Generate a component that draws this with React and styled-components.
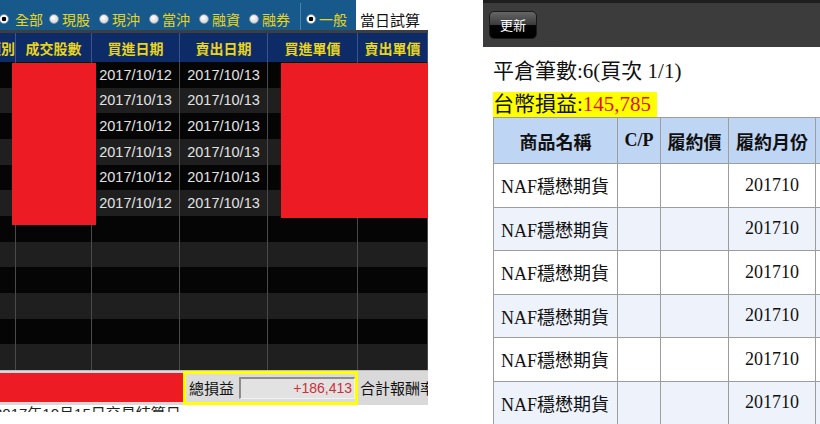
import React from "react";
import styled, { createGlobalStyle } from "styled-components";

const GlobalStyle = createGlobalStyle`
  html, body {
    margin: 0;
    padding: 0;
    background: #fff;
  }
  body {
    width: 820px;
    height: 424px;
    overflow: hidden;
  }
`;

const Page = styled.div`
  display: flex;
  align-items: flex-start;
  width: 820px;
  height: 424px;
  overflow: hidden;
`;

/* ---------- left: desktop trading terminal ---------- */

const Terminal = styled.div`
  position: relative;
  flex: none;
  width: 428px;
  overflow: hidden;
  font-family: "Liberation Sans", "Noto Sans CJK TC", sans-serif;
`;

const FilterBar = styled.div`
  display: flex;
  align-items: stretch;
  height: 33px;
  box-sizing: border-box;
  background: #17598b;
  border-bottom: 3px solid #3e3e3e;
  margin-left: -1px;
`;

const RadioItem = styled.label`
  flex: none;
  display: flex;
  align-items: center;
  gap: ${(p) => (p.$first ? 6 : 3)}px;
  width: 50px;
  padding-top: 8px;
  color: #e8d51c;
  font-size: 14px;
  white-space: nowrap;
`;

const Dot = styled.span`
  flex: none;
  width: 10px;
  height: 10px;
  border-radius: 50%;
  box-sizing: border-box;
  border: 1px solid #7f96b0;
  background: ${(p) =>
    p.$on
      ? "radial-gradient(circle, #000 0 2px, #fff 2.6px)"
      : "radial-gradient(circle at 40% 35%, #ffffff, #c9c9c9)"};
`;

const BarDivider = styled.span`
  flex: none;
  width: 1px;
  margin: 3px 5px 0 1px;
  background: #4b84ad;
`;

const Tab = styled.div`
  flex: none;
  display: flex;
  align-items: center;
  padding: 8px 0 0 4px;
  width: 73px;
  box-sizing: border-box;
  background: #fff;
  color: #111;
  font-size: 15px;
  white-space: nowrap;
`;

const cols = "16px 76px 88px 88px 90px 70px";

const HeadRow = styled.div`
  display: grid;
  grid-template-columns: ${cols};
  height: 29px;
  background: #0d2b66;
`;

const HeadCell = styled.div`
  display: flex;
  align-items: center;
  justify-content: ${(p) => (p.$end ? "flex-end" : "center")};
  overflow: hidden;
  white-space: nowrap;
  border-right: 1px solid #3b5589;
  color: #e8d51c;
  font-size: 14px;
  font-weight: bold;
`;

const Row = styled.div`
  display: grid;
  grid-template-columns: ${cols};
  height: 25.67px;
  background: ${(p) => (p.$odd ? "#1f1f1f" : "#050505")};
`;

const Cell = styled.div`
  display: flex;
  align-items: center;
  justify-content: center;
  border-right: 1px solid #4a4a4a;
  color: #e2e2e2;
  font-size: 14.5px;
  white-space: nowrap;
`;

const Redact = styled.div`
  position: absolute;
  background: #ed1c24;
`;

const TotalBar = styled.div`
  display: flex;
  align-items: center;
  height: 34px;
  border-top: 1px solid #bdbdbd;
  background: #d9d9d9;
  white-space: nowrap;
`;

const RedBlock = styled.div`
  flex: none;
  width: 183px;
  height: 29px;
  background: #ed1c24;
`;

const Highlight = styled.div`
  flex: none;
  display: flex;
  align-items: center;
  gap: 5px;
  width: 175px;
  height: 34px;
  box-sizing: border-box;
  border: 3px solid #ffff00;
  padding-left: 3px;
  background: #dcdcdc;
  color: #111;
  font-size: 15px;
`;

const ValueBox = styled.div`
  width: 116px;
  height: 22px;
  box-sizing: border-box;
  border-top: 2px solid #8c8c8c;
  border-left: 2px solid #8c8c8c;
  border-right: 1px solid #f2f2f2;
  border-bottom: 1px solid #f2f2f2;
  background: #e2e2e2;
  color: #cc2e3a;
  font-size: 14px;
  line-height: 19px;
  text-align: right;
  padding-right: 2px;
`;

const BarLabel = styled.span`
  padding-left: 2px;
  color: #111;
  font-size: 15px;
`;

const CutNote = styled.div`
  height: 6px;
  overflow: hidden;
  margin-left: -6px;
  color: #222;
  font-size: 15px;
  line-height: 15px;
  padding-top: 1px;
  white-space: nowrap;
`;

/* ---------- right: mobile web page ---------- */

const Mobile = styled.div`
  flex: none;
  margin-left: 55px;
  width: 337px;
  height: 424px;
  overflow: hidden;
  font-family: "Liberation Serif", "Noto Sans CJK TC", serif;
  color: #111;
`;

const MobileBar = styled.div`
  height: 47px;
  box-sizing: border-box;
  border-top: 3px solid #1e1e1e;
  background: #3c3c3c;
  padding: 8px 0 0 6px;
`;

const GlossButton = styled.button`
  width: 48px;
  height: 28px;
  padding: 0;
  border: 1px solid #1a1a1a;
  border-radius: 5px;
  background: linear-gradient(#666 0%, #3c3c3c 48%, #050505 52%, #000 100%);
  color: #fff;
  font-family: "Noto Sans CJK TC", sans-serif;
  font-size: 13px;
  line-height: 26px;
`;

const Summary = styled.div`
  margin: ${(p) => p.$top}px 0 0 10px;
  font-size: 21px;
  line-height: ${(p) => p.$lh}px;
  white-space: nowrap;
`;

const Marked = styled.span`
  display: inline-block;
  background: #ffff00;
  padding-right: 6px;
`;

const Money = styled.span`
  color: #e0121c;
`;

const PositionTable = styled.table`
  margin-left: 10px;
  border-collapse: collapse;
  table-layout: fixed;
  width: 430px;
  font-size: 18px;
`;

const Th = styled.th`
  height: 45px;
  padding: 0;
  border: 1px solid #9d9d9d;
  background: #bfd5f4;
  font-family: ${(p) =>
    p.$latin
      ? '"Liberation Serif", serif'
      : '"Noto Sans CJK TC", sans-serif'};
  font-weight: bold;
  font-size: 18px;
  white-space: nowrap;
`;

const Tr = styled.tr`
  height: 43.5px;
  background: ${(p) => (p.$odd ? "#eef3fb" : "#ffffff")};
`;

const Td = styled.td`
  padding: 0 0 0 ${(p) => (p.$left ? 7 : 0)}px;
  border: 1px solid #9d9d9d;
  text-align: ${(p) => (p.$left ? "left" : "center")};
  white-space: nowrap;
`;

const trades = [
  ["2017/10/12", "2017/10/13"],
  ["2017/10/13", "2017/10/13"],
  ["2017/10/12", "2017/10/13"],
  ["2017/10/13", "2017/10/13"],
  ["2017/10/12", "2017/10/13"],
  ["2017/10/12", "2017/10/13"],
];

const filters = [
  { label: "全部", on: true },
  { label: "現股" },
  { label: "現沖" },
  { label: "當沖" },
  { label: "融資" },
  { label: "融券" },
];

export default function App() {
  const rows = Array.from({ length: 12 }, (_, i) => trades[i] || ["", ""]);
  return (
    <>
      <GlobalStyle />
      <Page>
        <Terminal>
          <FilterBar>
            {filters.map((f, i) => (
              <RadioItem key={f.label} $first={i === 0}>
                <Dot $on={f.on} />
                {f.label}
              </RadioItem>
            ))}
            <BarDivider />
            <RadioItem>
              <Dot $on />
              一般
            </RadioItem>
            <Tab>當日試算</Tab>
          </FilterBar>
          <HeadRow>
            <HeadCell $end>類別</HeadCell>
            <HeadCell>成交股數</HeadCell>
            <HeadCell>買進日期</HeadCell>
            <HeadCell>賣出日期</HeadCell>
            <HeadCell>買進單價</HeadCell>
            <HeadCell>賣出單價</HeadCell>
          </HeadRow>
          {rows.map((r, i) => (
            <Row key={i} $odd={i % 2 === 1}>
              <Cell />
              <Cell />
              <Cell>{r[0]}</Cell>
              <Cell>{r[1]}</Cell>
              <Cell />
              <Cell />
            </Row>
          ))}
          <TotalBar>
            <RedBlock />
            <Highlight>
              總損益
              <ValueBox>+186,413</ValueBox>
            </Highlight>
            <BarLabel>合計報酬率</BarLabel>
          </TotalBar>
          <CutNote>2017年10月15日交易結算日</CutNote>
          <Redact style={{ top: 63, left: 12, width: 84, height: 162 }} />
          <Redact style={{ top: 63, left: 281, width: 147, height: 155 }} />
        </Terminal>

        <Mobile>
          <MobileBar>
            <GlossButton>更新</GlossButton>
          </MobileBar>
          <Summary $top={11} $lh={27}>
            平倉筆數:6(頁次 1/1)
          </Summary>
          <Summary $top={7} $lh={25}>
            <Marked>
              台幣損益:<Money>145,785</Money>
            </Marked>
          </Summary>
          <PositionTable>
            <colgroup>
              <col style={{ width: 124 }} />
              <col style={{ width: 43 }} />
              <col style={{ width: 68 }} />
              <col style={{ width: 87 }} />
              <col style={{ width: 108 }} />
            </colgroup>
            <thead>
              <tr>
                <Th>商品名稱</Th>
                <Th $latin>C/P</Th>
                <Th>履約價</Th>
                <Th>履約月份</Th>
                <Th>口數</Th>
              </tr>
            </thead>
            <tbody>
              {Array.from({ length: 6 }, (_, i) => (
                <Tr key={i} $odd={i % 2 === 1}>
                  <Td $left>NAF穩懋期貨</Td>
                  <Td />
                  <Td />
                  <Td>201710</Td>
                  <Td />
                </Tr>
              ))}
            </tbody>
          </PositionTable>
        </Mobile>
      </Page>
    </>
  );
}
